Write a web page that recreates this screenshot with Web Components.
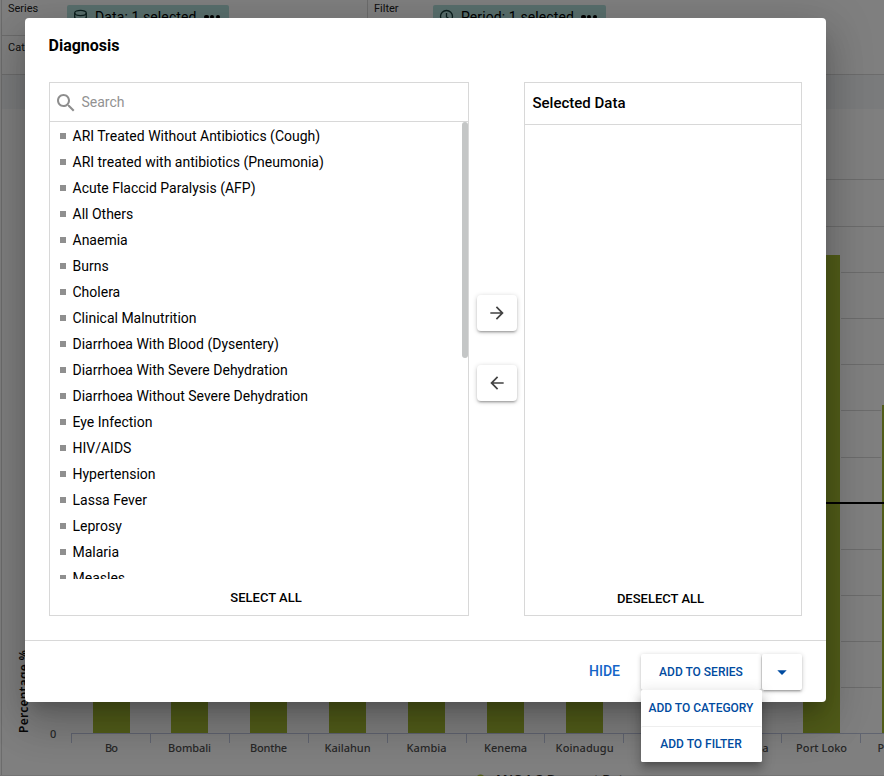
<!DOCTYPE html>
<html lang="en">
<head>
<meta charset="utf-8">
<title>Diagnosis</title>
<style>
html,body{margin:0;height:776px;overflow:hidden;background:#fff;font-family:Roboto,"Liberation Sans",sans-serif}
</style>
</head>
<body>
<visualizer-app></visualizer-app>
<script>
function define(name, markup, setup) {
  const t = document.createElement('template');
  t.innerHTML = markup;
  customElements.define(name, class extends HTMLElement {
    connectedCallback() {
      if (this.shadowRoot) return;
      const root = this.attachShadow({ mode: 'open' });
      root.append(t.content.cloneNode(true));
      if (setup) setup(root, this);
    }
  });
}

define('layout-chip', `<style>
:host{display:flex;align-items:center;box-sizing:border-box;height:24px;background:#b2dfdb;border-radius:2px;padding:0 9px 0 6px;font-size:14px;line-height:24px;color:#000;white-space:nowrap}
.icon{width:16px;height:16px;margin-right:6px;display:flex}
.text{letter-spacing:.1px;flex:1}
.dots{display:flex;gap:1.2px}
.dots i{width:4.4px;height:4.4px;border-radius:50%;background:#000}
svg,::slotted(svg){overflow:visible}
</style><span class="icon"><slot name="icon"></slot></span><span class="text"><slot></slot></span><span class="dots"><i></i><i></i><i></i></span>`);

define('layout-axis', `<style>
:host{display:flex;align-items:flex-start;box-sizing:border-box;height:36px;border-bottom:1px solid #d8d8d8;padding:0 6px}
.label{font-size:11px;line-height:16px;color:#222;width:59px;padding-top:.6px}
</style><span class="label"></span><slot></slot>`, (r, h) => { r.querySelector('.label').textContent = h.getAttribute('label'); });

define('layout-bar', `<style>
:host{display:grid;grid-template-columns:365px 1fr;height:75px;box-sizing:border-box;border-bottom:1px solid #d8d8d8}
.right{border-left:1px solid #d8d8d8}
layout-axis.filter{border:0}
layout-chip{margin-top:5px}
.data{width:162px}.period{width:173px}
.second{height:38px;border:0;padding-top:3px}
svg{display:block}
</style>
<div><layout-axis label="Series"><layout-chip class="data"><svg slot="icon" width="16" height="16" fill="none" stroke="#173d3a" stroke-width="1.3"><ellipse cx="7.5" cy="4" rx="5.8" ry="2.6"/><path d="M1.7 4v8c0 1.5 2.6 2.4 5.8 2.4s5.8-.9 5.8-2.4v-8M1.7 8c0 1.5 2.6 2.4 5.8 2.4s5.8-.9 5.8-2.4"/></svg>Data: 1 selected</layout-chip></layout-axis><layout-axis class="second" label="Category"></layout-axis></div>
<div class="right"><layout-axis class="filter" label="Filter"><layout-chip class="period"><svg slot="icon" width="16" height="16" fill="none" stroke="#173d3a" stroke-width="1.3"><circle cx="7.5" cy="7.5" r="6"/><path d="M7.5 4v4l3 2"/></svg>Period: 1 selected</layout-chip></layout-axis></div>`);

define('bar-chart', `<style>
:host{display:block;height:667px}
svg{display:block}
text{font-family:"Noto Sans","Open Sans",sans-serif;font-size:11px;font-weight:500;fill:#505050}
</style><svg width="884" height="667" viewBox="0 109 884 667"></svg>`, r => {
  const svg = r.querySelector('svg');
  const ns = 'http://www.w3.org/2000/svg';
  const add = (tag, attrs, text) => {
    const e = document.createElementNS(ns, tag);
    for (const k in attrs) e.setAttribute(k, attrs[k]);
    if (text) e.textContent = text;
    svg.append(e);
  };
  for (const y of [179, 226, 272, 318, 364, 410, 457, 549, 595, 641, 687]) add('rect', { x: 71, y, width: 813, height: 1, fill: '#d8d8d8' });
  const bars = [
    ['Bo', 93, 450, 13], ['Bombali', 171, 400, 43], ['Bonthe', 250, 500, 37],
    ['Kailahun', 329, 480, 46], ['Kambia', 408, 430, 40], ['Kenema', 487, 460, 43],
    ['Koinadugu', 566, 410, 58], ['', 645, 470, 0], ['Moyamba', 724, 440, 52],
    ['Port Loko', 803, 255, 51], ['Pujehun', 882, 405, 46]
  ];
  for (const [n, x, top, w] of bars) {
    add('rect', { x: x - 1, y: top - 1, width: 39, height: 734 - top, fill: '#fff' });
    add('rect', { x, y: top, width: 37, height: 733 - top, fill: '#a5bb32' });
    if (n) add('text', { x: x + 18.6 - w / 2, y: 752, textLength: w }, n);
  }
  add('rect', { x: 71, y: 502, width: 813, height: 2, fill: '#000' });
  add('rect', { x: 71, y: 733, width: 813, height: 1, fill: '#c0c8e0' });
  for (let i = 0; i < 11; i++) add('rect', { x: Math.round(71 + i * 78.9), y: 733, width: 1, height: 10, fill: '#c0c8e0' });
  add('text', { x: 50, y: 738 }, '0');
  add('text', { transform: 'translate(28 733) rotate(-90)', textLength: 83, style: 'font-size:12px;font-weight:600;fill:#111' }, 'Percentage %');
  add('rect', { x: 0, y: 775, width: 884, height: 1, fill: '#e8e8e8' });
  add('circle', { cx: 480.5, cy: 779, r: 4.5, fill: '#a5bb32' });
  add('text', { x: 494, y: 784, textLength: 137, style: 'font-size:13px;font-weight:600;fill:#222' }, 'ANC 1-3 Dropout Rate');
});

define('data-list', `<style>
:host{display:block;height:457px;overflow:hidden;position:relative}
ul{list-style:none;margin:0;padding:1px 0 0 10px}
li{display:flex;align-items:center;gap:6.5px;height:26px;font-size:14px;color:#000;white-space:nowrap}
li::before{content:"";width:6px;height:6px;background:#8f8f8f}
.thumb{position:absolute;right:0;top:0;width:6px;height:236px;border-radius:3px;background:#c4c6c6}
</style><ul></ul><div class="thumb"></div>`, r => {
  const ul = r.querySelector('ul');
  for (const n of ['ARI Treated Without Antibiotics (Cough)', 'ARI treated with antibiotics (Pneumonia)', 'Acute Flaccid Paralysis (AFP)', 'All Others', 'Anaemia', 'Burns', 'Cholera', 'Clinical Malnutrition', 'Diarrhoea With Blood (Dysentery)', 'Diarrhoea With Severe Dehydration', 'Diarrhoea Without Severe Dehydration', 'Eye Infection', 'HIV/AIDS', 'Hypertension', 'Lassa Fever', 'Leprosy', 'Malaria', 'Measles']) {
    const li = document.createElement('li');
    li.textContent = n;
    ul.append(li);
  }
});

define('search-field', `<style>
:host{display:flex;align-items:center;height:39px;box-sizing:border-box;border-bottom:1px solid #d8d8d8;padding-left:4px;gap:3.5px;font-size:14px;color:#929292}
svg{margin-top:2px}
</style><svg width="24" height="24" viewBox="0 0 24 24" fill="#8e8e8e"><path d="M15.5 14h-.79l-.28-.27C15.41 12.59 16 11.11 16 9.5 16 5.91 13.09 3 9.5 3S3 5.91 3 9.5 5.91 16 9.5 16c1.61 0 3.09-.59 4.23-1.57l.27.28v.79l5 4.99L20.49 19l-4.99-5zm-6 0C7.01 14 5 11.99 5 9.5S7.01 5 9.5 5 14 7.01 14 9.5 11.99 14 9.5 14z"/></svg><span>Search</span>`);

define('transfer-panel', `<style>
:host{display:flex;flex-direction:column;box-sizing:border-box;height:534px;border:1px solid #d8d8d8}
.body{flex:1;min-height:0}
.foot{height:36px;line-height:38px;text-align:center;font-size:13px;font-weight:500;color:#000;padding-left:14px}
:host([right]) .foot{height:34px;line-height:36px;padding:0 5px 0 0}
</style><slot name="head"></slot><div class="body"><slot></slot></div><div class="foot"></div>`, (r, h) => { r.querySelector('.foot').textContent = h.getAttribute('action'); });

define('arrow-button', `<style>
:host{display:flex;align-items:center;justify-content:center;width:40px;height:36px;border-radius:4px;background:#fff;box-shadow:0 1px 5px rgba(0,0,0,.2),0 2px 2px rgba(0,0,0,.14),0 3px 1px -2px rgba(0,0,0,.12)}
:host([back]) svg{transform:scaleX(-1)}
</style><svg width="20" height="20" viewBox="0 0 24 24" fill="#424242"><path d="M12 4l-1.41 1.41L16.17 11H4v2h12.17l-5.58 5.59L12 20l8-8z"/></svg>`);

define('split-button', `<style>
:host{display:flex;position:relative;gap:1px;font-size:12px;font-weight:500;color:#004ba0}
div{box-sizing:border-box}
.main,.item{width:120px;height:36px;line-height:37px;text-align:center;background:#fff;border-radius:2px;white-space:nowrap}
.main,.caret{box-shadow:0 1px 5px rgba(0,0,0,.2),0 2px 2px rgba(0,0,0,.14),0 3px 1px -2px rgba(0,0,0,.12)}
.caret{width:40px;height:36px;background:#fff;border-radius:2px;display:flex;align-items:center;justify-content:center}
.menu{position:absolute;left:0;top:36px;width:121px;border-radius:2px;background:#fff;box-shadow:0 5px 5px -3px rgba(0,0,0,.2),0 8px 10px 1px rgba(0,0,0,.14),0 3px 14px 2px rgba(0,0,0,.12)}
.item{width:121px;padding-right:1px}
.item+.item{border-top:1px solid #eee;line-height:34px}
</style><div class="main">ADD TO SERIES</div><div class="caret"><svg width="24" height="24" viewBox="0 0 24 24"><path d="M7.3 10.2h9.4L12 15z" fill="#004ba0"/></svg></div>
<div class="menu"><div class="item">ADD TO CATEGORY</div><div class="item">ADD TO FILTER</div></div>`);

define('dimension-dialog', `<style>
:host{position:absolute;left:25px;top:18px;width:801px;height:684px;display:flex;flex-direction:column;background:#fff;border-radius:4px;box-shadow:0 11px 15px -7px rgba(0,0,0,.2),0 24px 38px 3px rgba(0,0,0,.14),0 9px 46px 8px rgba(0,0,0,.12)}
h1{margin:0;height:64px;box-sizing:border-box;padding:18px 24px 0 23.5px;font-size:16px;line-height:20px;font-weight:700;color:#000}
.row{display:flex;padding:0 24px;height:558px}
.left{width:420px}.right{width:278px}
.mid{width:55px;display:flex;flex-direction:column;align-items:center;gap:34px;padding-top:213px;box-sizing:border-box}
.mid arrow-button{margin-left:1px}
.h{display:block;height:42px;box-sizing:border-box;border-bottom:1px solid #d8d8d8;padding-left:7.5px;line-height:40px;font-size:15px;font-weight:500;color:#000}
.actions{flex:1;display:flex;justify-content:flex-end;align-items:flex-start;gap:21px;border-top:1px solid #d8d8d8;padding:13px 24px 0}
.hide{font-size:14px;font-weight:500;line-height:35px;color:#1565c8}
</style>
<h1>Diagnosis</h1>
<div class="row">
<transfer-panel class="left" action="SELECT ALL"><search-field slot="head"></search-field><data-list></data-list></transfer-panel>
<div class="mid"><arrow-button></arrow-button><arrow-button back></arrow-button></div>
<transfer-panel class="right" right action="DESELECT ALL"><div class="h" slot="head">Selected Data</div></transfer-panel>
</div>
<div class="actions"><span class="hide">HIDE</span><split-button></split-button></div>`);

define('visualizer-app', `<style>
:host{display:block;position:relative;width:884px;height:776px;overflow:hidden}
.page{border-left:1px solid #d8d8d8;margin-left:1px;height:776px;box-sizing:border-box}
.band{height:34px;background:#f4f6f8}
bar-chart{margin-left:-2px}
.backdrop{position:absolute;inset:0;background:rgba(0,0,0,.5)}
</style>
<div class="page"><layout-bar></layout-bar><div class="band"></div><bar-chart></bar-chart></div>
<div class="backdrop"></div><dimension-dialog></dimension-dialog>`);
</script>
</body>
</html>
